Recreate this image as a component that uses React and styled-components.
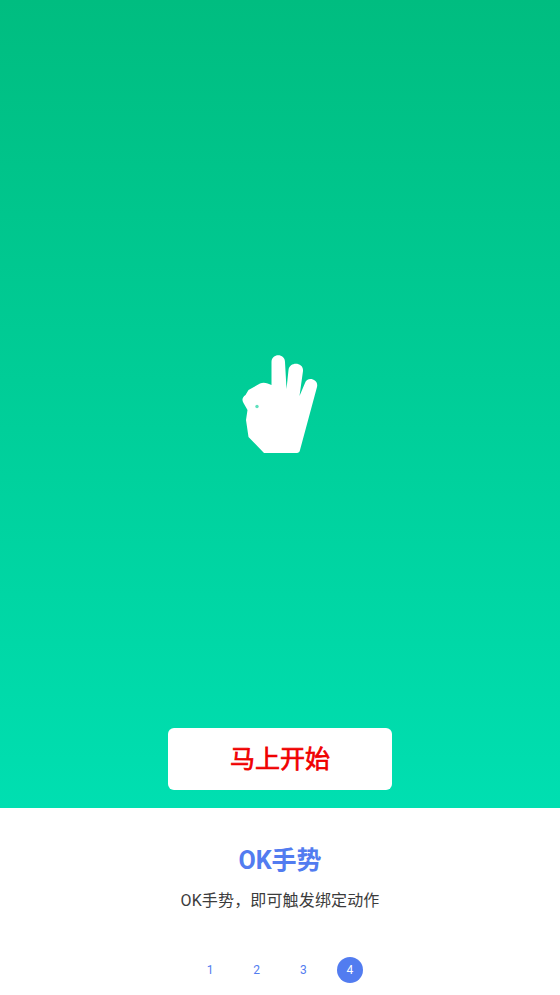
import React from 'react';
import styled, { createGlobalStyle } from 'styled-components';

const Global = createGlobalStyle`
    html, body {
        margin: 0;
        padding: 0;
        background: #fff;
    }
    body {
        font-family: Roboto, "Noto Sans CJK SC", sans-serif;
    }
`
const Page = styled.div`
    width: 560px;
    height: 995px;
    display: flex;
    flex-direction: column;
    overflow: hidden;
`
const Hero = styled.div`
    height: 808px;
    padding-top: 355px;
    padding-bottom: 18px;
    box-sizing: border-box;
    display: flex;
    flex-direction: column;
    align-items: center;
    justify-content: space-between;
    background: linear-gradient(180deg, #00bd80 0%, #00dfb1 100%);
`
const HandIcon = styled.svg`
    width: 80px;
    height: 100px;
    display: block;
    filter: blur(0.5px);
`
const StartButton = styled.button`
    width: 224px;
    height: 62px;
    padding: 0 0 4px;
    border: 0;
    border-radius: 6px;
    background: #fff;
    color: #f00000;
    font-family: Roboto, "Noto Sans CJK SC", sans-serif;
    font-size: 25px;
    font-weight: 400;
    -webkit-text-stroke: 0.7px #f00000;
    text-align: center;
`
const Info = styled.div`
    flex: 1;
    display: flex;
    flex-direction: column;
    align-items: center;
    background: #fff;
`
const Title = styled.h2`
    margin: 37px 0 0;
    height: 32px;
    line-height: 32px;
    font-size: 25px;
    font-weight: 700;
    color: #527cf0;
`
const Desc = styled.p`
    margin: 12px 0 0;
    height: 24px;
    line-height: 24px;
    font-size: 16px;
    letter-spacing: 0.15px;
    color: #3c3c3c;
`
const Pager = styled.div`
    margin-top: 44px;
    display: flex;
    gap: 20.67px;
`
const PageDot = styled.div`
    width: 26px;
    height: 26px;
    border-radius: 50%;
    display: flex;
    align-items: center;
    justify-content: center;
    font-size: 12px;
    color: ${p => (p.$active ? '#fff' : '#527cf0')};
    background: ${p => (p.$active ? '#527cf0' : 'transparent')};
`

const Hand = () =>
    <HandIcon viewBox="240 355 80 100">
        <path
            fill="#fff"
            d="M271.5 385 L271.5 362 C271.5 353 285 353 285 362 L286.5 389 L288.5 370 C289.5 361 304 362 303 371 L299.5 396 L305 383 C307 376 319 379 317 387 L300 450 C300 452 298 453 297 453 L264 453 L248.5 437 L246 420 L247.5 410 L243.5 403 C241.5 400 242.5 397 245.5 395 L248.5 390 L260 383.5 C264 381.5 268 383.5 271.5 385 Z"
        />
        <circle cx="257" cy="406.5" r="1.7" fill="#5fe0bd" />
    </HandIcon>

export default () =>
    <Page>
        <Global/>
        <Hero>
            <Hand/>
            <StartButton>马上开始</StartButton>
        </Hero>
        <Info>
            <Title>OK手势</Title>
            <Desc>OK手势，即可触发绑定动作</Desc>
            <Pager>
                {[1, 2, 3, 4].map(n =>
                    <PageDot key={n} $active={n === 4}>{n}</PageDot>
                )}
            </Pager>
        </Info>
    </Page>
